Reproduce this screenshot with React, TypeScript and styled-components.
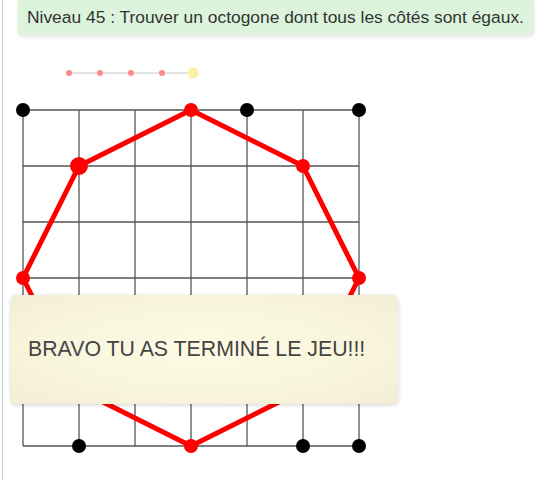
import styled, { createGlobalStyle } from "styled-components";

const GlobalStyle = createGlobalStyle`
  html, body {
    margin: 0;
    padding: 0;
    background: #ffffff;
    font-family: "Liberation Sans", Arial, sans-serif;
  }
`;

const Page = styled.div`
  position: relative;
  width: 539px;
  height: 480px;
  overflow: hidden;
  display: flex;
  flex-direction: column;
  background: linear-gradient(
      to right,
      transparent 2px,
      #cfcfcf 2px,
      #cfcfcf 3px,
      transparent 3px
    )
    no-repeat;
`;

const Banner = styled.div`
  margin-left: 18px;
  width: 516px;
  height: 35px;
  box-sizing: border-box;
  padding-left: 9px;
  display: flex;
  align-items: center;
  background: #dcf4dc;
  border-radius: 0 0 5px 5px;
  box-shadow: 0 2px 4px rgba(0, 0, 0, 0.12);
  color: #333;
  font-size: 17.4px;
  white-space: nowrap;
`;

const Progress = styled.svg`
  display: block;
  margin-top: 28px;
`;

const Board = styled.svg`
  display: block;
  margin-top: 12px;
`;

const Popup = styled.div`
  position: absolute;
  left: 11px;
  top: 295px;
  width: 387px;
  height: 109px;
  box-sizing: border-box;
  padding-left: 17px;
  display: flex;
  align-items: center;
  border-radius: 5px;
  background: radial-gradient(
    ellipse at center,
    #fdfbe4 0%,
    #f8f5dc 60%,
    #f1eed5 100%
  );
  box-shadow: 0 1px 4px rgba(0, 0, 0, 0.18);
  color: #444;
  font-size: 21.3px;
  white-space: nowrap;
`;

const STEP = 56;
const OX = 23;
const OY = 15;

const octagon: [number, number][] = [
  [3, 0],
  [5, 1],
  [6, 3],
  [5, 5],
  [3, 6],
  [1, 5],
  [0, 3],
  [1, 1],
];

const blackDots: [number, number][] = [
  [0, 0],
  [4, 0],
  [6, 0],
  [1, 6],
  [5, 6],
  [6, 6],
];

const px = (c: number) => OX + c * STEP;
const py = (r: number) => OY + r * STEP;

const App = () => {
  const lines = [0, 1, 2, 3, 4, 5, 6];
  return (
    <>
      <GlobalStyle />
      <Page>
        <Banner>
          Niveau 45 : Trouver un octogone dont tous les côtés sont égaux.
        </Banner>
        <Progress width="220" height="20" viewBox="0 0 220 20">
          <line x1="69" y1="10" x2="193" y2="10" stroke="#e4e4e4" strokeWidth="2" />
          {[69, 100, 131, 162].map((x) => (
            <circle key={x} cx={x} cy="10" r="3" fill="#ff8a8a" />
          ))}
          <circle cx="193" cy="10" r="5.5" fill="#fcefa6" />
        </Progress>
        <Board width="380" height="365" viewBox="0 0 380 365">
          {lines.map((i) => (
            <g key={i} stroke="#555" strokeWidth="1.3">
              <line x1={px(i)} y1={py(0)} x2={px(i)} y2={py(6)} />
              <line x1={px(0)} y1={py(i)} x2={px(6)} y2={py(i)} />
            </g>
          ))}
          <polygon
            points={octagon.map(([c, r]) => `${px(c)},${py(r)}`).join(" ")}
            fill="none"
            stroke="#ff0000"
            strokeWidth="5"
            strokeLinejoin="round"
          />
          {octagon.map(([c, r], i) => (
            <circle
              key={i}
              cx={px(c)}
              cy={py(r)}
              r={c === 1 && r === 1 ? 9 : 7}
              fill="#ff0000"
            />
          ))}
          {blackDots.map(([c, r], i) => (
            <circle key={i} cx={px(c)} cy={py(r)} r="7" fill="#000" />
          ))}
        </Board>
        <Popup>BRAVO TU AS TERMINÉ LE JEU!!!</Popup>
      </Page>
    </>
  );
};

export default App;
